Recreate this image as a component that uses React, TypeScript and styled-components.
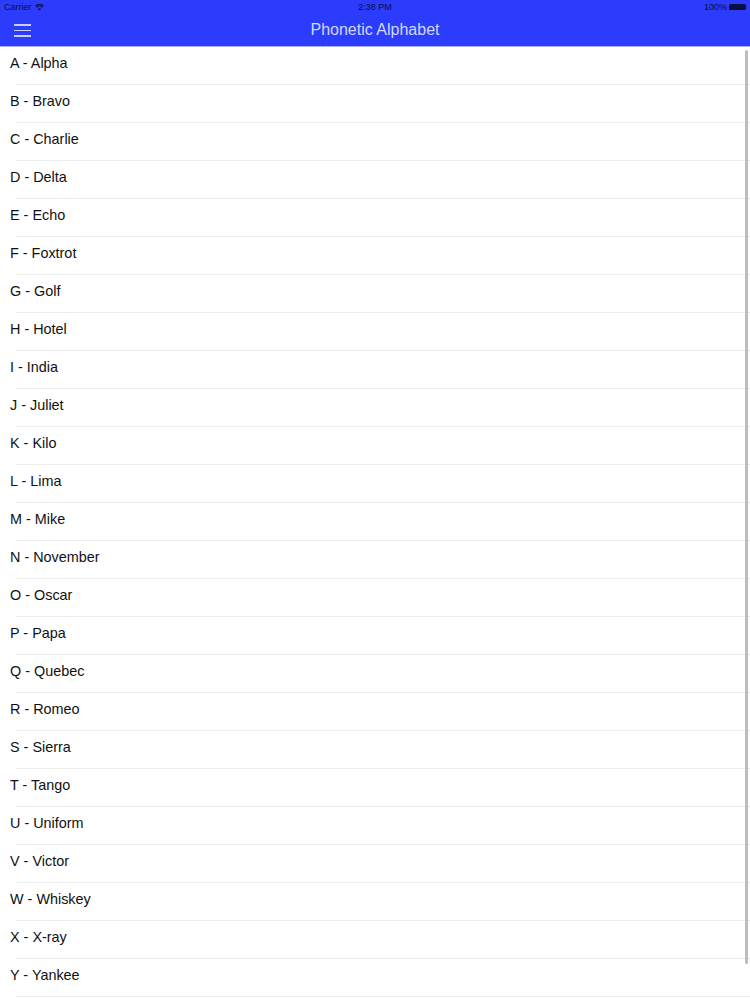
import React from "react";
import styled, { createGlobalStyle } from "styled-components";

const words = [
  "Alpha", "Bravo", "Charlie", "Delta", "Echo", "Foxtrot", "Golf", "Hotel",
  "India", "Juliet", "Kilo", "Lima", "Mike", "November", "Oscar", "Papa",
  "Quebec", "Romeo", "Sierra", "Tango", "Uniform", "Victor", "Whiskey",
  "X-ray", "Yankee",
];

const GlobalStyle = createGlobalStyle`
  html, body {
    margin: 0;
    padding: 0;
    background: #ffffff;
    font-family: "Liberation Sans", Arial, sans-serif;
    overflow: hidden;
  }
`;

const Screen = styled.div`
  display: flex;
  flex-direction: column;
  width: 750px;
  height: 1000px;
  overflow: hidden;
`;

const Header = styled.header`
  background: #2b3cfc;
  border-bottom: 1px solid #aab0f0;
`;

const StatusBar = styled.div`
  display: grid;
  grid-template-columns: 1fr auto 1fr;
  align-items: center;
  height: 14px;
  padding: 0 4px;
  font-size: 9px;
  color: #0a0f40;
`;

const Carrier = styled.div`
  display: flex;
  align-items: center;
  gap: 3px;
`;

const Battery = styled.div`
  display: flex;
  align-items: center;
  justify-content: flex-end;
  gap: 2px;
`;

const BatteryBody = styled.span`
  display: inline-block;
  width: 17px;
  height: 6px;
  border-radius: 1.5px;
  background: #0a0f40;
`;

const NavBar = styled.div`
  position: relative;
  display: flex;
  align-items: center;
  justify-content: center;
  height: 32px;
`;

const MenuButton = styled.button`
  position: absolute;
  left: 12px;
  top: 8px;
  display: flex;
  flex-direction: column;
  gap: 4px;
  width: 20px;
  padding: 2px;
  border: none;
  background: transparent;
`;

const MenuLine = styled.span`
  display: block;
  height: 1.5px;
  width: 17px;
  background: #c9d0ff;
`;

const Title = styled.h1`
  margin: 0;
  font-size: 16px;
  font-weight: normal;
  color: #d2d8ff;
`;

const ListArea = styled.div`
  position: relative;
  flex: 1;
  overflow: hidden;
`;

const List = styled.ul`
  margin: 0;
  padding: 0;
  list-style: none;
`;

const Row = styled.li`
  position: relative;
  box-sizing: border-box;
  height: 38px;
  padding: 8px 10px 0;
  font-size: 14.4px;
  line-height: 17px;
  color: #111111;

  &::after {
    content: "";
    position: absolute;
    left: 16px;
    right: 0;
    bottom: 0;
    height: 1px;
    background: #ececec;
  }
`;

const ScrollThumb = styled.div`
  position: absolute;
  right: 2px;
  top: 3px;
  width: 3px;
  height: 914px;
  border-radius: 2px;
  background: #bdbdbd;
`;

export default function App() {
  return (
    <Screen>
      <GlobalStyle />
      <Header>
        <StatusBar>
          <Carrier>
            Carrier
            <svg width="9" height="7" viewBox="0 0 10 8">
              <path d="M5 7.5 L3.2 5.6 A2.6 2.6 0 0 1 6.8 5.6 Z" fill="#0a0f40" />
              <path d="M1.6 4 A4.9 4.9 0 0 1 8.4 4" stroke="#0a0f40" strokeWidth="1.2" fill="none" />
              <path d="M0.2 2.4 A6.9 6.9 0 0 1 9.8 2.4" stroke="#0a0f40" strokeWidth="1.2" fill="none" />
            </svg>
          </Carrier>
          <div>2:38 PM</div>
          <Battery>
            100%
            <BatteryBody />
          </Battery>
        </StatusBar>
        <NavBar>
          <MenuButton aria-label="menu">
            <MenuLine />
            <MenuLine />
            <MenuLine />
          </MenuButton>
          <Title>Phonetic Alphabet</Title>
        </NavBar>
      </Header>
      <ListArea>
        <List>
          {words.map((w) => (
            <Row key={w}>
              {w[0]} - {w}
            </Row>
          ))}
        </List>
        <ScrollThumb />
      </ListArea>
    </Screen>
  );
}
